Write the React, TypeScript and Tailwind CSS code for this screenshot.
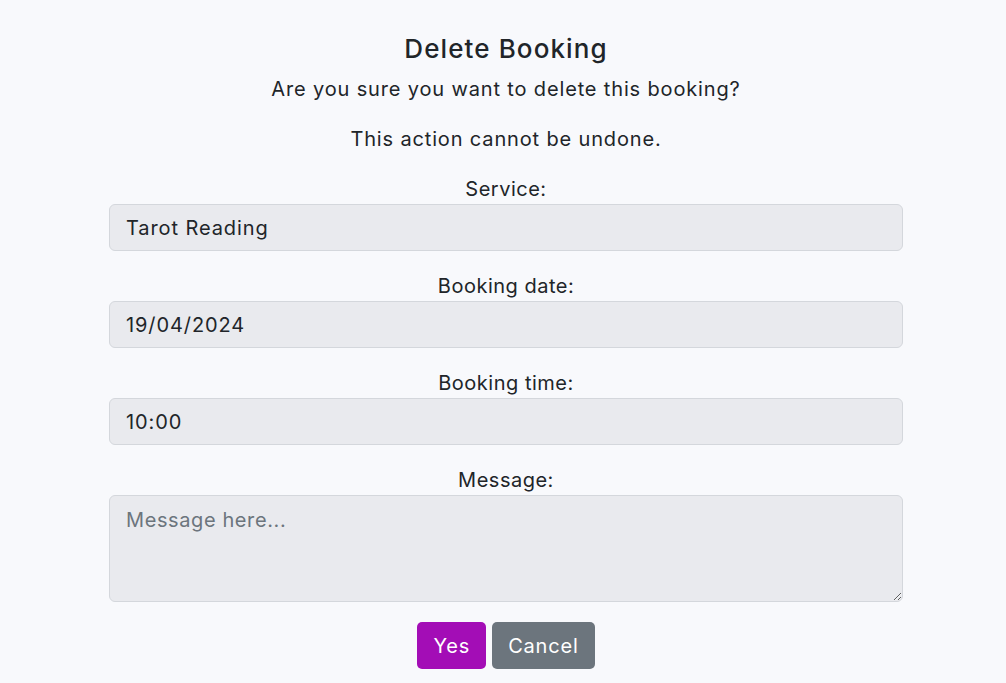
const fields = [
  { label: 'Service:', value: 'Tarot Reading' },
  { label: 'Booking date:', value: '19/04/2024' },
  { label: 'Booking time:', value: '10:00' },
]

export default function App() {
  return (
    <main className="min-h-screen bg-[#f8f9fc] text-[#212529] font-['Inter',sans-serif]">
      <div className="flex flex-col items-center pt-[34px] pb-[14px] pl-[109px] pr-[103px]">
        <h1 className="text-[26px] leading-[30px] font-medium tracking-[1.1px]">Delete Booking</h1>
        <p className="mt-[10px] text-[20px] leading-[30px] tracking-[0.85px]">Are you sure you want to delete this booking?</p>
        <p className="mt-[20px] text-[20px] leading-[30px] tracking-[0.85px]">This action cannot be undone.</p>

        <form className="w-full flex flex-col items-center">
          {fields.map((f) => (
            <div key={f.label} className="w-full flex flex-col items-center mt-[20px]">
              <label className="text-[20px] leading-[30px] tracking-[0.5px]">{f.label}</label>
              <input
                readOnly
                value={f.value}
                className="w-full h-[47px] px-[16px] rounded-[6px] border border-[#d4d7dc] bg-[#e9eaee] text-[20px] tracking-[0.9px] text-[#212529] outline-none"
              />
            </div>
          ))}

          <div className="w-full flex flex-col items-center mt-[20px]">
            <label className="text-[20px] leading-[30px] tracking-[0.5px]">Message:</label>
            <textarea
              placeholder="Message here..."
              className="w-full h-[107px] px-[16px] py-[9px] rounded-[6px] border border-[#d4d7dc] bg-[#e9eaee] text-[20px] tracking-[0.6px] placeholder:text-[#6c757d] outline-none"
            />
          </div>

          <div className="flex gap-[6px] mt-[20px]">
            <button type="button" className="h-[47px] px-[16px] rounded-[5px] bg-[#a30db6] text-white text-[20px] tracking-[0.8px]">
              Yes
            </button>
            <button type="button" className="h-[47px] px-[16px] rounded-[5px] bg-[#6c757d] text-white text-[20px] tracking-[0.8px]">
              Cancel
            </button>
          </div>
        </form>
      </div>
    </main>
  )
}
